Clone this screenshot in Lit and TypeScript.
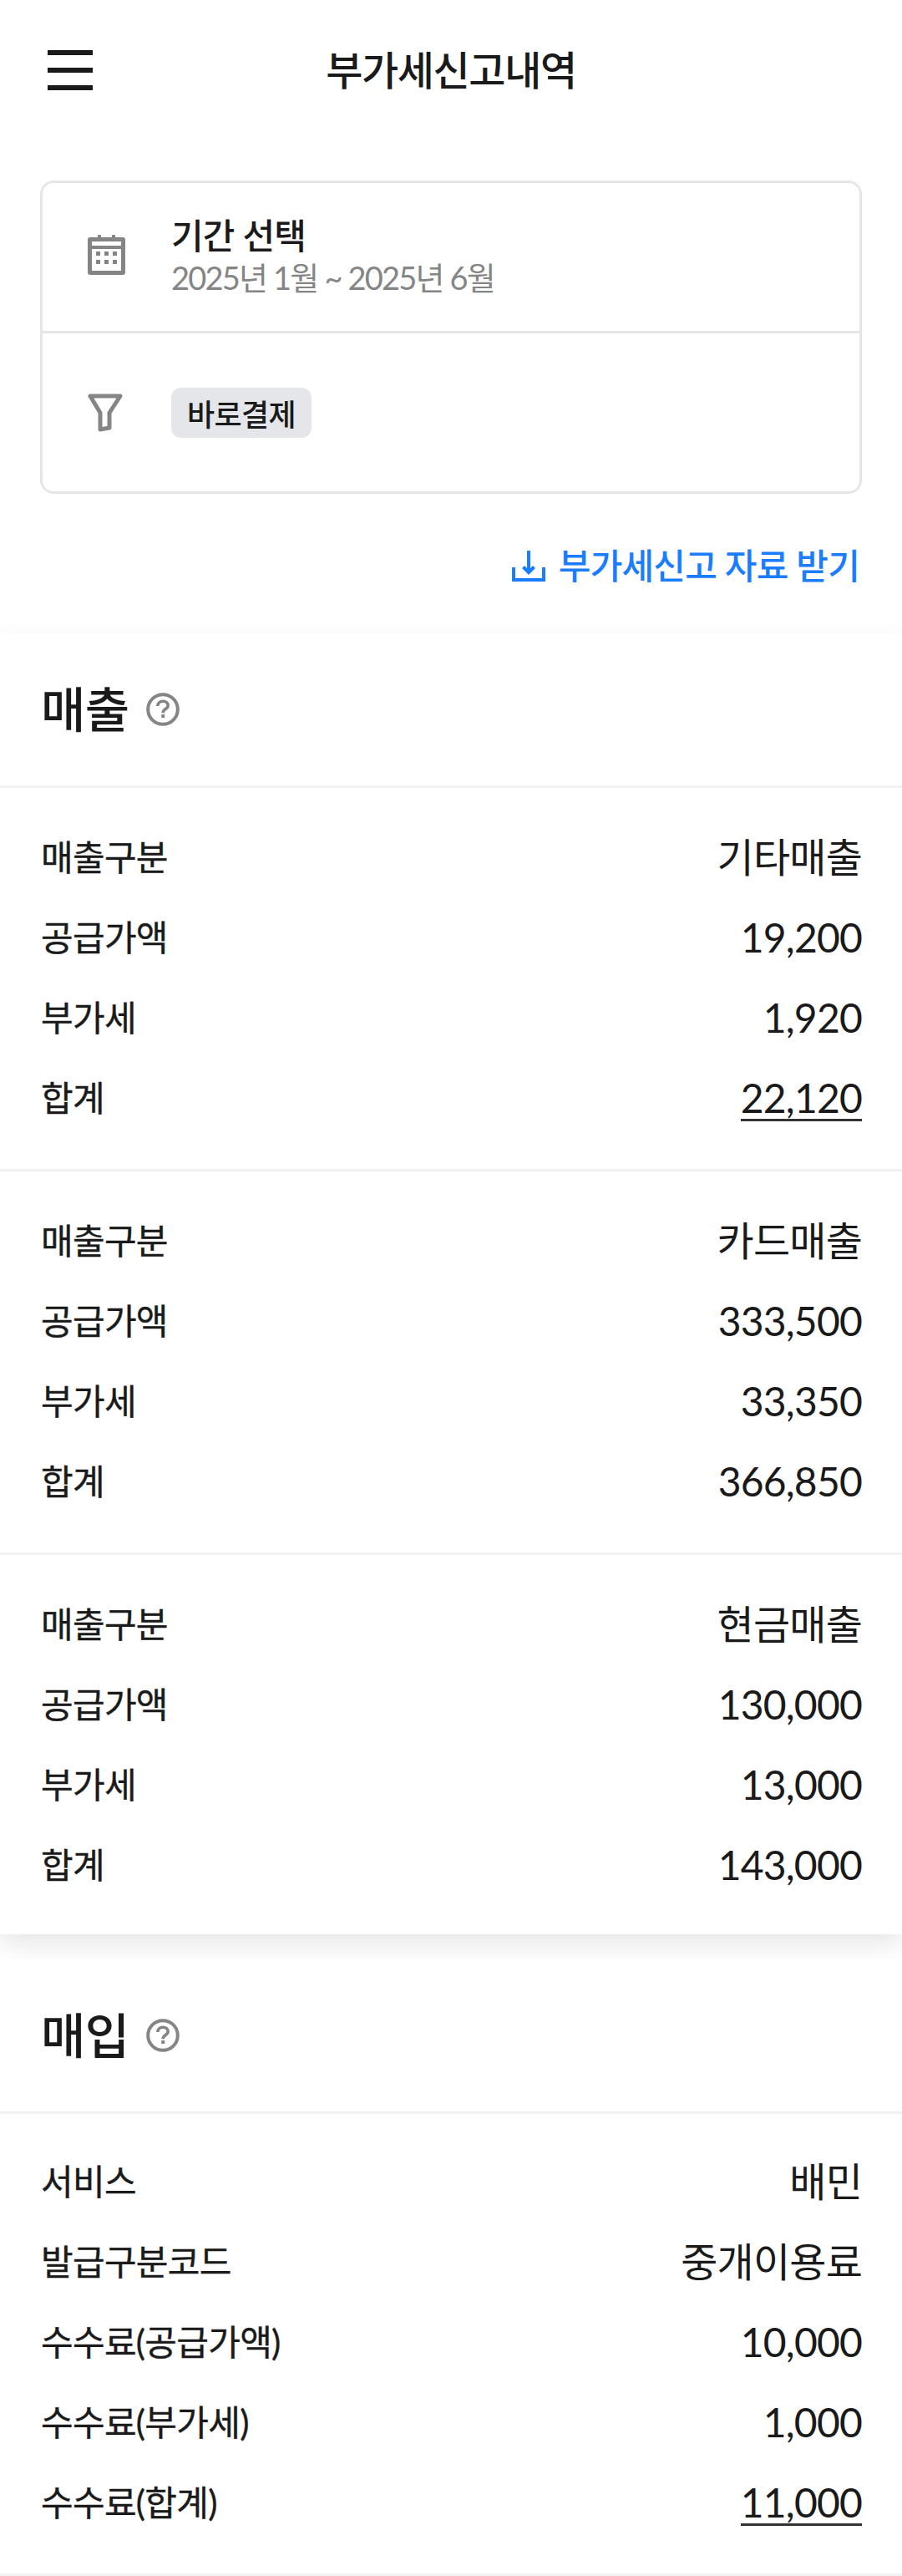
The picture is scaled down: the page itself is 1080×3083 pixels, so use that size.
import { LitElement, html, css, svg } from "lit";
import { customElement } from "lit/decorators.js";

type Row = [string, string, boolean?];

const sales: Row[][] = [
  [["매출구분", "기타매출"], ["공급가액", "19,200"], ["부가세", "1,920"], ["합계", "22,120", true]],
  [["매출구분", "카드매출"], ["공급가액", "333,500"], ["부가세", "33,350"], ["합계", "366,850"]],
  [["매출구분", "현금매출"], ["공급가액", "130,000"], ["부가세", "13,000"], ["합계", "143,000"]],
];
const purchase: Row[] = [
  ["서비스", "배민"],
  ["발급구분코드", "중개이용료"],
  ["수수료(공급가액)", "10,000"],
  ["수수료(부가세)", "1,000"],
  ["수수료(합계)", "11,000", true],
];

const helpIcon = html`<svg class="help" viewBox="0 0 40 40" width="40" height="40">
  <circle cx="20" cy="20" r="17.800" fill="none" stroke="#858585" stroke-width="4"/>
  <path d="M13.800 16c0-3.600 2.800-5.800 6.300-5.800s6 2.200 6 5.200c0 4.200-6 4.200-6 8.800" fill="none" stroke="#858585" stroke-width="3.600"/>
  <rect x="18.200" y="26" width="4" height="4" fill="#858585"/>
</svg>`;

@customElement("app-root")
export class AppRoot extends LitElement {
  static styles = css`
    :host {
      display: block;
      width: 1080px;
      background: #fff;
      font-family: Lato, "Noto Sans CJK KR", sans-serif;
      color: #1a1a1a;
      overflow: hidden;
    }
    .header {
      height: 168px;
      display: flex;
      align-items: center;
      justify-content: center;
      position: relative;
    }
    .menu {
      position: absolute;
      left: 57px;
      top: 60px;
      width: 54px;
      height: 48px;
      display: flex;
      flex-direction: column;
      justify-content: space-between;
    }
    .menu span { display: block; height: 6px; background: #1a1a1a; }
    .title {
      font-size: 48px;
      font-weight: 500;
      letter-spacing: -1.4px;
      line-height: 60px;
    }
    .card {
      margin: 48px 48px 0;
      border: 3px solid #e6e6e6;
      border-radius: 16px;
    }
    .period {
      height: 177px;
      display: flex;
      align-items: center;
      border-bottom: 3px solid #e6e6e6;
    }
    .filter {
      height: 189px;
      display: flex;
      align-items: center;
    }
    .ico { width: 154px; flex: none; display: flex; justify-content: flex-start; padding-left: 54px; box-sizing: border-box; }
    .period .ico { margin-bottom: 5px; }
    .period-text { padding-bottom: 5px; }
    .period-title { font-size: 42px; font-weight: 500; line-height: 54px; letter-spacing: -0.8px; }
    .period-date { font-size: 38px; font-weight: 400; line-height: 46px; letter-spacing: -1.8px; color: #858585; }
    .chip {
      height: 60px;
      padding: 0 19px;
      display: flex;
      align-items: center;
      background: #e5e6e9;
      border-radius: 12px;
      font-size: 36px;
      font-weight: 500;
      letter-spacing: -0.6px;
    }
    .dl {
      display: flex;
      align-items: center;
      justify-content: flex-end;
      gap: 16px;
      height: 167px;
      padding-right: 51px;
      color: #1a7dff;
      font-size: 42px;
      font-weight: 500;
      letter-spacing: -0.8px;
    }
    .dl svg { margin-top: 5px; }
    section {
      background: #fff;
      position: relative;
    }
    .sales { box-shadow: 0 12px 30px rgba(0, 0, 0, 0.1); }
    .gap { height: 30px; }
    .sec-head {
      display: flex;
      align-items: center;
      gap: 20px;
      padding-left: 49px;
      height: 182px;
      border-bottom: 3px solid #f2f2f2;
    }
    .sec-title { font-size: 58px; font-weight: 500; line-height: 70px; letter-spacing: -0.5px; }
    .group { padding: 36px 48px 36px 49px; border-bottom: 3px solid #f2f2f2; }
    .sales .group:last-child { border-bottom: none; padding-bottom: 34px; }
    .purchase .group { padding-top: 34px; }
    .row { display: flex; justify-content: space-between; align-items: center; height: 96px; }
    .label { font-size: 42px; font-weight: 400; letter-spacing: -0.7px; line-height: 60px; border-bottom: 3px solid transparent; -webkit-text-stroke: 0.4px #1a1a1a; }
    .value { font-size: 48px; font-weight: 400; letter-spacing: -0.8px; border-bottom: 3px solid transparent; line-height: 51px; }
    .value.u { border-bottom-color: #333; }
  `;

  private rows(rows: Row[]) {
    return rows.map(
      ([l, v, u]) => html`<div class="row">
        <span class="label">${l}</span>
        <span class="value ${u ? "u" : ""}">${v}</span>
      </div>`
    );
  }

  render() {
    return html`
      <div class="header">
        <div class="menu"><span></span><span></span><span></span></div>
        <div class="title">부가세신고내역</div>
      </div>
      <div class="card">
        <div class="period">
          <div class="ico">
            <svg width="45" height="48" viewBox="0 0 45 48">
              <path fill="#858585" d="M3 3h9V1.500a2 2 0 0 1 4 0V3h13V1.500a2 2 0 0 1 4 0V3h9a3 3 0 0 1 3 3v39a3 3 0 0 1-3 3H3a3 3 0 0 1-3-3V6a3 3 0 0 1 3-3z"/>
              <rect x="5" y="8" width="35" height="5" fill="#fff"/>
              <rect x="5" y="17" width="35" height="26" fill="#fff"/>
              ${[10, 20, 30].flatMap((x) => [20, 30].map((y) => svg`<rect x="${x}" y="${y}" width="5" height="5" fill="#858585"/>`))}
            </svg>
          </div>
          <div class="period-text">
            <div class="period-title">기간 선택</div>
            <div class="period-date">2025년 1월 ~ 2025년 6월</div>
          </div>
        </div>
        <div class="filter">
          <div class="ico">
            <svg width="42" height="46" viewBox="0 0 42 46">
              <path fill="none" stroke="#858585" stroke-width="5" stroke-linejoin="round" d="M3 3h36L26 23v18l-11 2V23z"/>
            </svg>
          </div>
          <div class="chip">바로결제</div>
        </div>
      </div>
      <div class="dl">
        <svg width="40" height="37" viewBox="0 0 40 37">
          <path fill="none" stroke="#1a7dff" stroke-width="4" d="M2 20v15h36V20"/>
          <path fill="none" stroke="#1a7dff" stroke-width="4" d="M20 0v25"/>
          <path fill="#1a7dff" d="M12 21l3-3 5 5 5-5 3 3-8 8z"/>
        </svg>
        <span>부가세신고 자료 받기</span>
      </div>
      <section class="sales">
        <div class="sec-head"><span class="sec-title">매출</span>${helpIcon}</div>
        ${sales.map((g) => html`<div class="group">${this.rows(g)}</div>`)}
      </section>
      <div class="gap"></div>
      <section class="purchase">
        <div class="sec-head"><span class="sec-title">매입</span>${helpIcon}</div>
        <div class="group">${this.rows(purchase)}</div>
      </section>
    `;
  }
}
